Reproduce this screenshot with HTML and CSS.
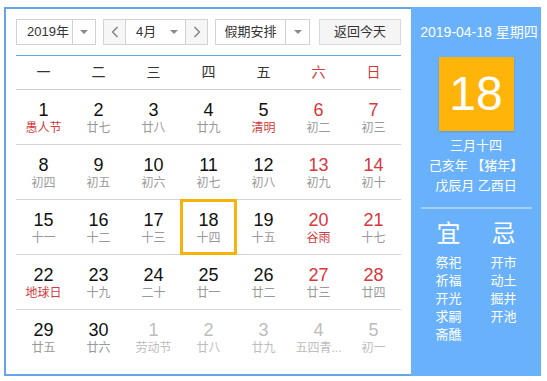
FILE: index.html
```html
<!DOCTYPE html>
<html lang="zh-CN">
<head>
<meta charset="utf-8">
<title>万年历</title>
<link rel="stylesheet" href="styles.css">
</head>
<body>
<div class="cal">
  <div class="main">
    <div class="toolbar">
      <div class="select year">
        <span class="sel-text">2019年</span>
        <span class="sel-arrow"><i class="tri"></i></span>
      </div>
      <div class="month-group">
        <span class="nav prev"><svg width="8" height="12" viewBox="0 0 8 12"><polyline points="6.5,1 1.5,6 6.5,11" fill="none" stroke="#777" stroke-width="1.2"/></svg></span>
        <span class="month-sel"><span>4月</span><i class="tri"></i></span>
        <span class="nav next"><svg width="8" height="12" viewBox="0 0 8 12"><polyline points="1.5,1 6.5,6 1.5,11" fill="none" stroke="#777" stroke-width="1.2"/></svg></span>
      </div>
      <div class="select holiday">
        <span class="sel-text">假期安排</span>
        <span class="sel-arrow"><i class="tri"></i></span>
      </div>
      <span class="today-btn">返回今天</span>
    </div>
    <div class="weekdays">
      <span>一</span><span>二</span><span>三</span><span>四</span><span>五</span><span class="we">六</span><span class="we">日</span>
    </div>
    <div class="grid">
      <div class="row">
        <div class="cell"><b>1</b><em class="fest">愚人节</em></div>
        <div class="cell"><b>2</b><em>廿七</em></div>
        <div class="cell"><b>3</b><em>廿八</em></div>
        <div class="cell"><b>4</b><em>廿九</em></div>
        <div class="cell"><b>5</b><em class="fest">清明</em></div>
        <div class="cell we"><b>6</b><em>初二</em></div>
        <div class="cell we"><b>7</b><em>初三</em></div>
      </div>
      <div class="row">
        <div class="cell"><b>8</b><em>初四</em></div>
        <div class="cell"><b>9</b><em>初五</em></div>
        <div class="cell"><b>10</b><em>初六</em></div>
        <div class="cell"><b>11</b><em>初七</em></div>
        <div class="cell"><b>12</b><em>初八</em></div>
        <div class="cell we"><b>13</b><em>初九</em></div>
        <div class="cell we"><b>14</b><em>初十</em></div>
      </div>
      <div class="row">
        <div class="cell"><b>15</b><em>十一</em></div>
        <div class="cell"><b>16</b><em>十二</em></div>
        <div class="cell"><b>17</b><em>十三</em></div>
        <div class="cell today"><b>18</b><em>十四</em></div>
        <div class="cell"><b>19</b><em>十五</em></div>
        <div class="cell we"><b>20</b><em class="fest">谷雨</em></div>
        <div class="cell we"><b>21</b><em>十七</em></div>
      </div>
      <div class="row">
        <div class="cell"><b>22</b><em class="fest">地球日</em></div>
        <div class="cell"><b>23</b><em>十九</em></div>
        <div class="cell"><b>24</b><em>二十</em></div>
        <div class="cell"><b>25</b><em>廿一</em></div>
        <div class="cell"><b>26</b><em>廿二</em></div>
        <div class="cell we"><b>27</b><em>廿三</em></div>
        <div class="cell we"><b>28</b><em>廿四</em></div>
      </div>
      <div class="row">
        <div class="cell"><b>29</b><em>廿五</em></div>
        <div class="cell"><b>30</b><em>廿六</em></div>
        <div class="cell other"><b>1</b><em>劳动节</em></div>
        <div class="cell other"><b>2</b><em>廿八</em></div>
        <div class="cell other"><b>3</b><em>廿九</em></div>
        <div class="cell other"><b>4</b><em>五四青...</em></div>
        <div class="cell other"><b>5</b><em>初一</em></div>
      </div>
    </div>
  </div>
  <aside class="panel">
    <div class="p-date">2019-04-18 星期四</div>
    <div class="p-day">18</div>
    <div class="p-lunar">
      <div>三月十四</div>
      <div>己亥年 【猪年】</div>
      <div>戊辰月 乙酉日</div>
    </div>
    <div class="p-sep"></div>
    <div class="p-yiji">
      <div class="yj-col">
        <div class="yj-title">宜</div>
        <div>祭祀</div><div>祈福</div><div>开光</div><div>求嗣</div><div>斋醮</div>
      </div>
      <div class="yj-col">
        <div class="yj-title">忌</div>
        <div>开市</div><div>动土</div><div>掘井</div><div>开池</div>
      </div>
    </div>
  </aside>
</div>
</body>
</html>
```

FILE: styles.css
```css
* { box-sizing: border-box; }
html, body { margin: 0; padding: 0; background: #fff; }
body {
  font-family: "Liberation Sans", "Noto Sans CJK SC", sans-serif;
  color: #333;
}
.cal {
  display: flex;
  margin: 7px 0 0 4px;
  width: 537px;
  height: 369px;
}
.main {
  width: 407px;
  border: 2px solid #66a6e8;
  border-right: none;
  padding: 10px;
}
.toolbar {
  display: flex;
  height: 37px;
  padding-bottom: 10px;
  border-bottom: 1px solid #62a5ea;
  font-size: 13px;
}
.select, .month-group, .today-btn {
  height: 26px;
  border: 1px solid #d2d2d2;
  display: flex;
  align-items: stretch;
  line-height: 24px;
  color: #333;
}
.year { width: 80px; }
.year .sel-text { width: 55px; padding-left: 10px; }
.holiday { width: 95px; margin-left: 7px; }
.holiday .sel-text { width: 69px; text-align: center; }
.sel-arrow {
  flex: 1;
  border-left: 1px solid #d2d2d2;
  display: flex;
  align-items: center;
  justify-content: center;
}
.tri {
  display: block;
  width: 0; height: 0;
  border-left: 4px solid transparent;
  border-right: 4px solid transparent;
  border-top: 4px solid #8a8a8a;
}
.month-group { width: 105px; margin-left: 7px; }
.nav {
  width: 22px;
  background: #f6f6f6;
  display: flex;
  align-items: center;
  justify-content: center;
}
.prev { border-right: 1px solid #d2d2d2; }
.next { border-left: 1px solid #d2d2d2; }
.month-sel {
  flex: 1;
  display: flex;
  align-items: center;
  justify-content: space-between;
  padding: 0 7px 0 10px;
}
.today-btn {
  width: 82px;
  margin-left: 9px;
  background: #f5f5f5;
  border-color: #dadada;
  justify-content: center;
}
.weekdays {
  display: grid;
  grid-template-columns: repeat(7, 55px);
  height: 34px;
  border-bottom: 1px solid #cfcfcf;
  font-size: 14px;
  line-height: 33px;
  text-align: center;
  color: #333;
}
.weekdays .we { color: #d9363e; }
.row {
  display: grid;
  grid-template-columns: repeat(7, 55px);
  height: 55px;
  border-bottom: 1px solid #d5d5d5;
}
.row:last-child { height: 54px; border-bottom: none; }
.cell {
  position: relative;
  padding-top: 10px;
  text-align: center;
}
.cell b {
  display: block;
  font-weight: normal;
  font-size: 18px;
  line-height: 20px;
  color: #111;
}
.cell em {
  display: block;
  font-style: normal;
  font-size: 12px;
  line-height: 16px;
  color: #999;
  white-space: nowrap;
}
.cell.we b { color: #d9363e; }
.cell em.fest { color: #d33a40; }
.cell.other b, .cell.other em { color: #bdbdbd; }
.cell.today::after {
  content: "";
  position: absolute;
  top: -1px; left: -1px; right: -1px; bottom: -1px;
  border: 3px solid #f5b30c;
}
.panel {
  width: 130px;
  background: #6ab1fc;
  color: #fff;
  padding-top: 15px;
  display: flex;
  flex-direction: column;
  align-items: center;
}
.p-date {
  font-size: 14px;
  line-height: 20px;
  white-space: nowrap;
  padding-left: 6px;
}
.p-day {
  margin-top: 15px;
  width: 75px;
  height: 74px;
  background: #ffb40a;
  font-size: 48px;
  line-height: 74px;
  text-align: center;
  box-shadow: 0 1px 2px rgba(0,0,0,.15);
}
.p-lunar {
  margin-top: 5px;
  font-size: 13px;
  line-height: 20px;
  text-align: center;
}
.p-sep {
  margin-top: 11px;
  width: 111px;
  height: 2px;
  background: rgba(255,255,255,.4);
}
.p-yiji {
  margin-top: 10px;
  display: flex;
}
.yj-col {
  width: 55px;
  text-align: center;
  font-size: 13px;
  line-height: 18px;
}
.yj-title {
  font-size: 24px;
  line-height: 30px;
  margin-bottom: 5px;
}
```
